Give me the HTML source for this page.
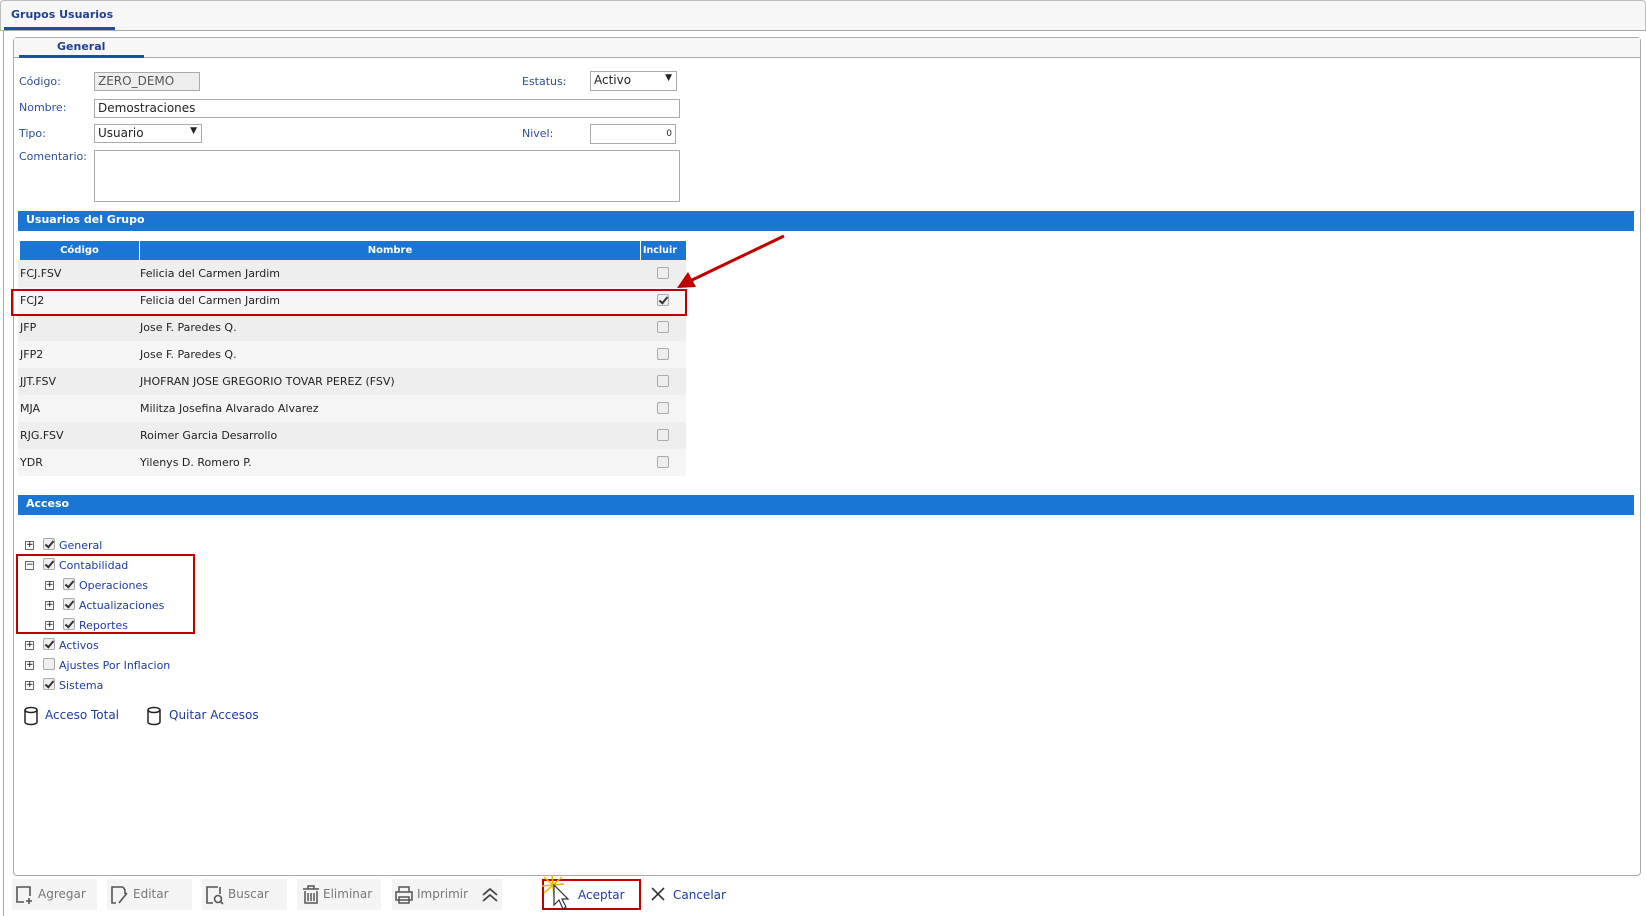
<!DOCTYPE html>
<html><head><meta charset="utf-8"><style>
*{box-sizing:border-box}
body{margin:0;width:1646px;height:916px;background:#fff;font-family:"DejaVu Sans","Liberation Sans",sans-serif;font-size:11px;color:#222;position:relative;overflow:hidden}
.a{position:absolute}
.lbl{color:#2d4d9a;font-size:11px}
.inp{position:absolute;border:1px solid #aaa;background:#fff;font-size:12px;padding:1px 3px;color:#222}
.bar{position:absolute;left:18px;width:1616px;background:#1a76d2;color:#fff;font-weight:bold;font-size:11px;padding:2px 8px}
.row{position:absolute;left:18px;width:668px;height:27px;line-height:27px;font-size:11px}
.row span{position:absolute}
.cb{position:absolute;width:12px;height:12px;border:1px solid #aaa;border-radius:2px;background:#eee}
.cb.c::after{content:"";position:absolute;left:3px;top:0px;width:3px;height:7px;border:solid #333;border-width:0 2px 2px 0;transform:rotate(40deg)}
.tr{position:absolute;font-size:11px;color:#1f3aa0;height:20px}
.exp{position:absolute;width:9px;height:9px;border:1px solid #666;font-size:9px;line-height:7px;text-align:center;color:#000;background:#fff}
.btn{position:absolute;top:879px;height:31px;background:#f4f4f4;color:#777;font-size:12px;line-height:31px}
.btn svg{position:absolute;top:6px}
</style></head><body>
<div class="a" style="left:0;top:0;width:1646px;height:31px;background:#f7f7f7;border:1px solid #bbb;border-bottom:1px solid #aaa;border-radius:4px 4px 0 0"></div>
<div class="a" style="left:11px;top:8px;font-weight:bold;color:#1f3f8f;font-size:11px">Grupos Usuarios</div>
<div class="a" style="left:4px;top:27px;width:111px;height:3px;background:#1f4f9f"></div>
<div class="a" style="left:3px;top:30px;width:1px;height:886px;background:#aaa"></div>
<div class="a" style="left:13px;top:37px;width:1628px;height:839px;border:1px solid #aaa;border-radius:4px"></div>
<div class="a" style="left:14px;top:38px;width:1626px;height:20px;background:#f7f7f7;border-bottom:1px solid #aaa"></div>
<div class="a" style="left:57px;top:40px;font-weight:bold;color:#1f3f8f;font-size:11px">General</div>
<div class="a" style="left:19px;top:55px;width:125px;height:3px;background:#1f4f9f"></div>
<div class="a lbl" style="left:19px;top:75px">Código:</div>
<div class="inp" style="left:94px;top:72px;width:106px;height:19px;background:#eee;color:#555">ZERO_DEMO</div>
<div class="a lbl" style="left:522px;top:75px">Estatus:</div>
<div class="inp" style="left:590px;top:71px;width:87px;height:20px">Activo<span style="position:absolute;right:4px;top:1px;font-size:9px">▼</span></div>
<div class="a lbl" style="left:19px;top:101px">Nombre:</div>
<div class="inp" style="left:94px;top:99px;width:586px;height:19px">Demostraciones</div>
<div class="a lbl" style="left:19px;top:127px">Tipo:</div>
<div class="inp" style="left:94px;top:124px;width:108px;height:19px">Usuario<span style="position:absolute;right:4px;top:1px;font-size:9px">▼</span></div>
<div class="a lbl" style="left:522px;top:127px">Nivel:</div>
<div class="inp" style="left:590px;top:124px;width:86px;height:20px;text-align:right;font-size:9px;padding-top:4px">0</div>
<div class="a lbl" style="left:19px;top:150px">Comentario:</div>
<div class="inp" style="left:94px;top:150px;width:586px;height:52px"></div>
<div class="bar" style="top:211px;height:20px">Usuarios del Grupo</div>
<div class="a" style="left:20px;top:241px;width:666px;height:19px;background:#1a76d2;color:#fff;font-weight:bold;font-size:10px;line-height:19px">
<span class="a" style="left:0;width:120px;text-align:center;border-right:1px solid #fff">Código</span>
<span class="a" style="left:120px;width:501px;text-align:center;border-right:1px solid #fff">Nombre</span>
<span class="a" style="left:623px;width:43px;font-size:9.5px">Incluir</span></div>
<div class="row" style="top:260px;background:#eee"><span style="left:2px">FCJ.FSV</span><span style="left:122px">Felicia del Carmen Jardim</span><i class="cb" style="left:639px;top:7px"></i></div>
<div class="row" style="top:287px;background:#f5f5f5"><span style="left:2px">FCJ2</span><span style="left:122px">Felicia del Carmen Jardim</span><i class="cb c" style="left:639px;top:7px"></i></div>
<div class="row" style="top:314px;background:#eee"><span style="left:2px">JFP</span><span style="left:122px">Jose F. Paredes Q.</span><i class="cb" style="left:639px;top:7px"></i></div>
<div class="row" style="top:341px;background:#f5f5f5"><span style="left:2px">JFP2</span><span style="left:122px">Jose F. Paredes Q.</span><i class="cb" style="left:639px;top:7px"></i></div>
<div class="row" style="top:368px;background:#eee"><span style="left:2px">JJT.FSV</span><span style="left:122px">JHOFRAN JOSE GREGORIO TOVAR PEREZ (FSV)</span><i class="cb" style="left:639px;top:7px"></i></div>
<div class="row" style="top:395px;background:#f5f5f5"><span style="left:2px">MJA</span><span style="left:122px">Militza Josefina Alvarado Alvarez</span><i class="cb" style="left:639px;top:7px"></i></div>
<div class="row" style="top:422px;background:#eee"><span style="left:2px">RJG.FSV</span><span style="left:122px">Roimer Garcia Desarrollo</span><i class="cb" style="left:639px;top:7px"></i></div>
<div class="row" style="top:449px;background:#f5f5f5"><span style="left:2px">YDR</span><span style="left:122px">Yilenys D. Romero P.</span><i class="cb" style="left:639px;top:7px"></i></div>
<div class="a" style="left:11px;top:289px;width:676px;height:27px;border:2px solid #c00000"></div>
<svg class="a" style="left:660px;top:225px" width="140" height="80"><line x1="124" y1="11" x2="30" y2="56" stroke="#c00000" stroke-width="3"/><polygon points="17,63 28,47 36,62" fill="#c00000"/></svg>
<div class="bar" style="top:495px;height:20px">Acceso</div>
<div class="exp" style="left:25px;top:541px">+</div><i class="cb c" style="left:43px;top:538px"></i><div class="tr" style="left:59px;top:539px">General</div>
<div class="exp" style="left:25px;top:561px">−</div><i class="cb c" style="left:43px;top:558px"></i><div class="tr" style="left:59px;top:559px">Contabilidad</div>
<div class="exp" style="left:45px;top:581px">+</div><i class="cb c" style="left:63px;top:578px"></i><div class="tr" style="left:79px;top:579px">Operaciones</div>
<div class="exp" style="left:45px;top:601px">+</div><i class="cb c" style="left:63px;top:598px"></i><div class="tr" style="left:79px;top:599px">Actualizaciones</div>
<div class="exp" style="left:45px;top:621px">+</div><i class="cb c" style="left:63px;top:618px"></i><div class="tr" style="left:79px;top:619px">Reportes</div>
<div class="exp" style="left:25px;top:641px">+</div><i class="cb c" style="left:43px;top:638px"></i><div class="tr" style="left:59px;top:639px">Activos</div>
<div class="exp" style="left:25px;top:661px">+</div><i class="cb" style="left:43px;top:658px"></i><div class="tr" style="left:59px;top:659px">Ajustes Por Inflacion</div>
<div class="exp" style="left:25px;top:681px">+</div><i class="cb c" style="left:43px;top:678px"></i><div class="tr" style="left:59px;top:679px">Sistema</div>
<div class="a" style="left:16px;top:554px;width:179px;height:80px;border:2px solid #c00000"></div>
<svg class="a" style="left:23px;top:706px" width="16" height="20"><ellipse cx="8" cy="4" rx="6" ry="2.5" fill="none" stroke="#222" stroke-width="1.5"/><path d="M2 4V16A6 2.5 0 0 0 14 16V4" fill="none" stroke="#222" stroke-width="1.5"/></svg>
<div class="a" style="left:45px;top:708px;color:#1f3aa0;font-size:12px">Acceso Total</div>
<svg class="a" style="left:146px;top:706px" width="16" height="20"><ellipse cx="8" cy="4" rx="6" ry="2.5" fill="none" stroke="#222" stroke-width="1.5"/><path d="M2 4V16A6 2.5 0 0 0 14 16V4" fill="none" stroke="#222" stroke-width="1.5"/></svg>
<div class="a" style="left:169px;top:708px;color:#1f3aa0;font-size:12px">Quitar Accesos</div>
<div class="btn" style="left:12px;width:85px"><svg style="left:3px" width="20" height="20"><path d="M12 2H2V17H9M15 11V2H12M14 13V19M11 16H17" fill="none" stroke="#555" stroke-width="1.6"/></svg><span style="position:absolute;left:26px">Agregar</span></div>
<div class="btn" style="left:107px;width:85px"><svg style="left:3px" width="20" height="20"><path d="M13 2H2V18H6M15 9V5L13 2M9 18L17 8" fill="none" stroke="#555" stroke-width="1.6"/></svg><span style="position:absolute;left:26px">Editar</span></div>
<div class="btn" style="left:202px;width:85px"><svg style="left:3px" width="20" height="20"><path d="M13 2H2V18H8M15 9V2" fill="none" stroke="#555" stroke-width="1.6"/><circle cx="13" cy="14" r="3.5" fill="none" stroke="#555" stroke-width="1.6"/><path d="M15.5 16.5L18 19" stroke="#555" stroke-width="1.6"/></svg><span style="position:absolute;left:26px">Buscar</span></div>
<div class="btn" style="left:297px;width:84px"><svg style="left:4px" width="20" height="20"><path d="M2 4H18M7 4V1H13V4M4 6V18H16V6M7 8V16M10 8V16M13 8V16" fill="none" stroke="#555" stroke-width="1.5"/></svg><span style="position:absolute;left:26px">Eliminar</span></div>
<div class="btn" style="left:392px;width:110px"><svg style="left:2px" width="20" height="20"><path d="M5 7V2H15V7M2 7H18V15H2ZM5 12H15V18H5Z" fill="none" stroke="#555" stroke-width="1.5"/></svg><span style="position:absolute;left:25px">Imprimir</span><svg style="left:88px" width="20" height="20"><path d="M3 10L10 4L17 10M3 16L10 10L17 16" fill="none" stroke="#444" stroke-width="1.8"/></svg></div>
<div class="a" style="left:542px;top:879px;width:99px;height:31px;border:2px solid #c00000"></div>
<div class="a" style="left:578px;top:888px;color:#1f3aa0;font-size:12px">Aceptar</div>
<svg class="a" style="left:540px;top:873px" width="36" height="40"><g stroke="#f0b400" stroke-width="1.5"><line x1="12" y1="2" x2="14" y2="24"/><line x1="2" y1="13" x2="24" y2="11"/><line x1="4" y1="4" x2="22" y2="20"/><line x1="22" y1="4" x2="4" y2="20"/></g><path d="M14 12V32L19 27L23 36L26 34L22 26H28Z" fill="#fff" stroke="#333" stroke-width="1.2"/></svg>
<svg class="a" style="left:650px;top:886px" width="16" height="16"><path d="M2 2L14 14M14 2L2 14" stroke="#333" stroke-width="1.6"/></svg>
<div class="a" style="left:673px;top:888px;color:#1f3aa0;font-size:12px">Cancelar</div>
</body></html>
